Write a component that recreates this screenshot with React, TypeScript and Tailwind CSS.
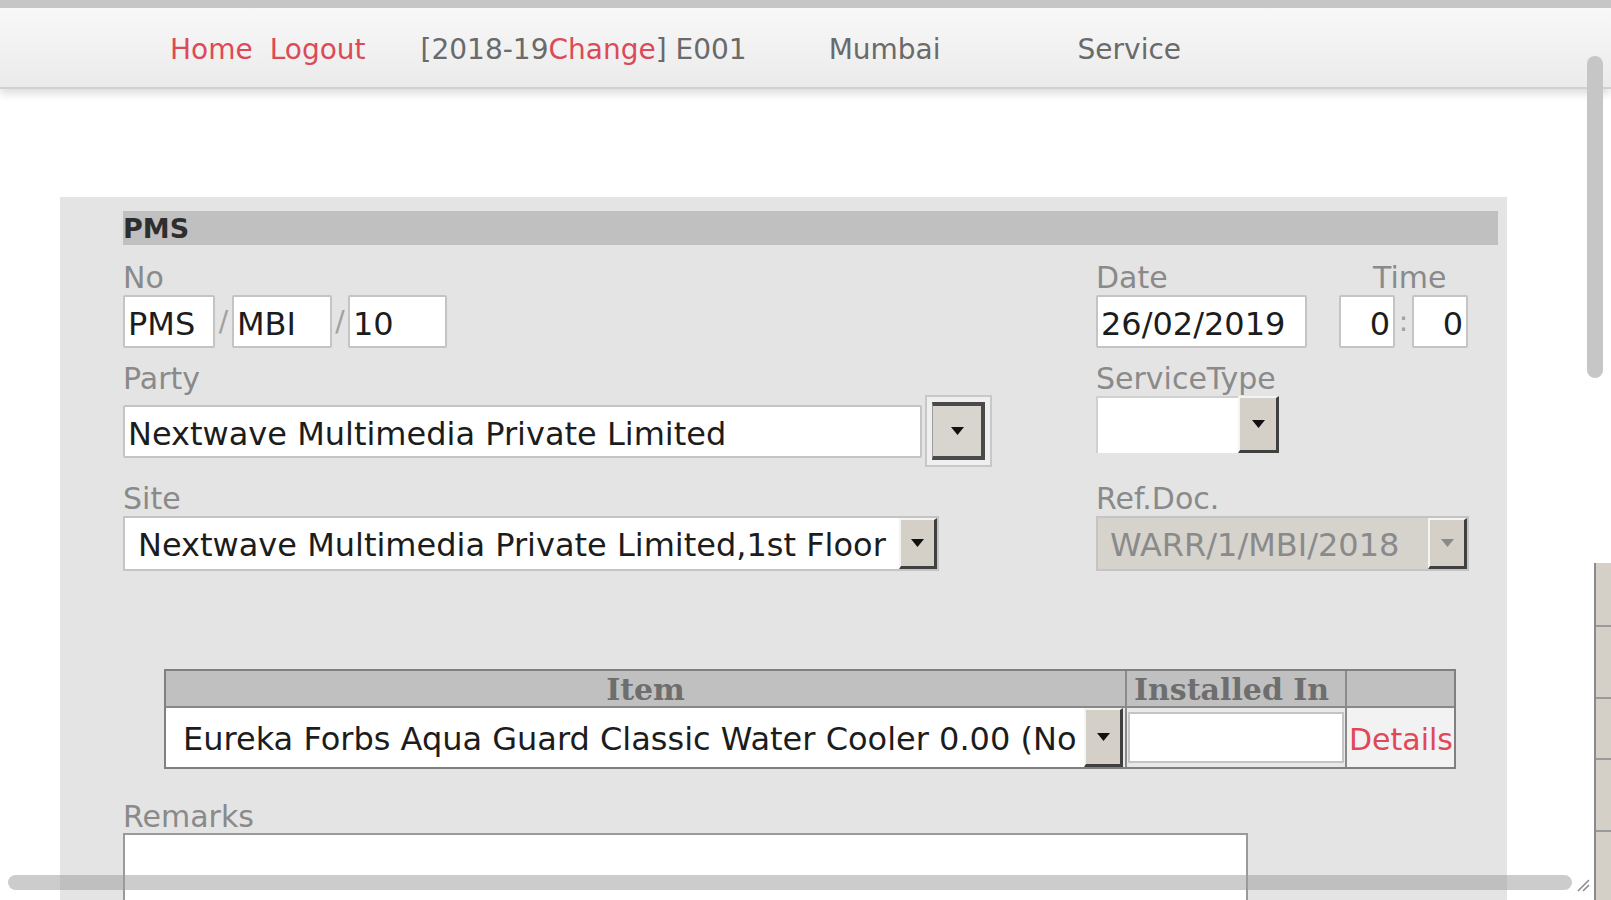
import React from "react";

const sans = "font-['DejaVu_Sans',sans-serif]";

const Arrow = ({ color = "#111" }: { color?: string }) => (
  <svg width="13" height="8" viewBox="0 0 13 8">
    <path d="M0 0h13L6.5 8z" fill={color} />
  </svg>
);

// classic 3d dropdown button
const DropBtn = ({ className = "", muted = false }: { className?: string; muted?: boolean }) => (
  <div
    className={`flex items-center justify-center bg-[#d4d0c8] border-t-2 border-l-2 border-t-[#f4f4f4] border-l-[#f4f4f4] border-b-[3px] border-r-[3px] border-b-[#404040] border-r-[#404040] ${className}`}
  >
    <Arrow color={muted ? "#8a8a8a" : "#111"} />
  </div>
);

const Label = ({ children, className = "" }: { children: React.ReactNode; className?: string }) => (
  <div className={`h-[34px] leading-[36px] text-[30px] text-[#8a8a8a] ${className}`}>{children}</div>
);

const Box = ({ value, className = "" }: { value: string; className?: string }) => (
  <div
    className={`h-[53px] overflow-hidden bg-white border-2 border-[#c4c4c4] rounded-[2px] leading-[55px] text-[32px] text-[#1c1c1c] px-[3px] ${className}`}
  >
    {value}
  </div>
);

export default function App() {
  return (
    <div className={`relative h-[900px] w-[1611px] overflow-hidden bg-white ${sans}`}>
      {/* top bar */}
      <header className="h-[89px] border-t-[8px] border-[#c6c6c6] bg-gradient-to-b from-[#f8f8f8] to-[#ebebeb] border-b-2 border-b-[#d0d0d0] shadow-[0_5px_8px_rgba(0,0,0,0.13)]">
        <nav className="flex h-full items-center pl-[170px] pt-[4px] text-[28px] text-[#6a6a6a]">
          <a className="text-[#dc4a58]">Home</a>
          <a className="ml-[17px] text-[#dc4a58]">Logout</a>
          <span className="ml-[55px]">
            [2018-19<a className="text-[#dc4a58]">Change</a>] E001
          </span>
          <span className="ml-[82px]">Mumbai</span>
          <span className="ml-[137px]">Service</span>
        </nav>
      </header>

      {/* form panel */}
      <div className="mt-[108px] ml-[60px] w-[1447px] h-[703px] bg-[#e4e4e4] pt-[14px] pl-[63px] pr-[9px]">
        <div className="h-[34px] bg-[#c0c0c0] text-[27px] font-bold leading-[36px] text-[#2e2e2e]">PMS</div>

        {/* No / Date / Time */}
        <div className="mt-[15px] grid grid-cols-[973px_1fr]">
          <div>
            <Label>No</Label>
            <div className="mt-px flex items-center">
              <Box value="PMS" className="w-[92px]" />
              <span className="w-[17px] text-center text-[28px] text-[#a0a0a0]">/</span>
              <Box value="MBI" className="w-[100px]" />
              <span className="w-[16px] text-center text-[28px] text-[#a0a0a0]">/</span>
              <Box value="10" className="w-[99px]" />
            </div>
          </div>
          <div className="flex">
            <div className="w-[211px]">
              <Label>Date</Label>
              <Box value="26/02/2019" className="mt-px w-[211px]" />
            </div>
            <div className="ml-[32px]">
              <Label className="pl-[34px]">Time</Label>
              <div className="mt-px flex items-center">
                <Box value="0" className="w-[56px] text-right" />
                <span className="w-[17px] text-center text-[28px] text-[#a0a0a0]">:</span>
                <Box value="0" className="w-[56px] text-right" />
              </div>
            </div>
          </div>
        </div>

        {/* Party / ServiceType */}
        <div className="mt-[13px] grid grid-cols-[973px_1fr]">
          <div>
            <Label>Party</Label>
            <div className="flex h-[72px] items-center">
              <Box value="Nextwave Multimedia Private Limited" className="w-[799px]" />
              <div className="ml-[3px] h-[72px] w-[67px] border-2 border-[#c8c8c8] bg-[#efefef] p-[5px]">
                <div className="flex h-full items-center justify-center bg-[#d8d5ce] border-t-[4px] border-r-[4px] border-b-[4px] border-l border-t-[#4a4a4a] border-r-[#4a4a4a] border-b-[#4a4a4a] border-l-[#9a9a9a]">
                  <Arrow />
                </div>
              </div>
            </div>
          </div>
          <div>
            <Label>ServiceType</Label>
            <div className="mt-px flex h-[57px] w-[183px]">
              <div className="flex-1 bg-white border-t-2 border-l-2 border-[#d0d0d0]" />
              <DropBtn className="w-[41px]" />
            </div>
          </div>
        </div>

        {/* Site / Ref.Doc. */}
        <div className="mt-[14px] grid grid-cols-[973px_1fr]">
          <div>
            <Label>Site</Label>
            <div className="mt-px flex h-[55px] w-[816px] border-2 border-[#c4c4c4] bg-white">
              <div className="flex-1 overflow-hidden whitespace-nowrap pl-[13px] text-[32px] leading-[55px] text-[#1c1c1c]">
                Nextwave Multimedia Private Limited,1st Floor
              </div>
              <DropBtn className="w-[38px]" />
            </div>
          </div>
          <div>
            <Label>Ref.Doc.</Label>
            <div className="mt-px flex h-[55px] w-[373px] border-2 border-[#c4c4c4] bg-[#d6d3cd]">
              <div className="flex-1 pl-[12px] text-[32px] leading-[55px] text-[#8a8a8a]">WARR/1/MBI/2018</div>
              <DropBtn className="w-[39px]" muted />
            </div>
          </div>
        </div>

        {/* items table */}
        <div className="mt-[98px] ml-[41px] w-[1292px] border-2 border-[#808080] bg-[#e9e9e9]">
          <div className="grid h-[37px] grid-cols-[961px_220px_1fr] bg-[#c0c0c0] border-b-2 border-[#888] font-['DejaVu_Serif',serif] text-[30px] font-bold leading-[37px] text-[#6e6e6e]">
            <div className="text-center border-r-2 border-[#8a8a8a]">Item</div>
            <div className="pl-[7px] border-r-2 border-[#8a8a8a] whitespace-nowrap overflow-hidden">Installed In</div>
            <div />
          </div>
          <div className="grid h-[59px] grid-cols-[961px_220px_1fr] grid-rows-[59px]">
            <div className="flex overflow-hidden border-r-2 border-[#8a8a8a] pr-[2px]">
              <div className="flex-1 overflow-hidden whitespace-nowrap bg-white pl-[17px] text-[32px] leading-[63px] text-[#1c1c1c]">
                Eureka Forbs Aqua Guard Classic Water Cooler 0.00 (No Warranty)
              </div>
              <DropBtn className="w-[39px]" />
            </div>
            <div className="flex items-center border-r-2 border-[#8a8a8a] px-[1px]">
              <div className="h-[51px] w-full bg-white border-2 border-[#c4c4c4]" />
            </div>
            <div className="overflow-hidden whitespace-nowrap bg-[#f2f2f2] pl-[2px] text-[30px] leading-[63px] text-[#e04858]">Details</div>
          </div>
        </div>

        {/* remarks */}
        <Label className="mt-[30px]">Remarks</Label>
        <div className="h-[90px] w-[1125px] border-t-2 border-l-2 border-r-2 border-[#9a9a9a] bg-white" />
      </div>

      {/* scrollbars and window edge */}
      <div className="absolute left-[1587px] top-[56px] h-[322px] w-[16px] rounded-full bg-[#c6c6c6]" />
      <div className="absolute left-[1594px] top-[563px] h-[337px] w-[17px] border-l-2 border-[#8a8a8a] bg-[#d4d0c8]">
        <div className="mt-[62px] border-t-2 border-[#9a9a9a]" />
        <div className="mt-[70px] border-t-2 border-[#9a9a9a]" />
        <div className="mt-[59px] border-t-2 border-[#9a9a9a]" />
        <div className="mt-[70px] border-t-2 border-[#9a9a9a]" />
      </div>
      <div className="absolute left-[8px] top-[875px] h-[15px] w-[1564px] rounded-full bg-[#9a9a9a]/50" />
      <svg className="absolute left-[1576px] top-[878px]" width="14" height="14" viewBox="0 0 14 14">
        <path d="M2 13L13 2M7 13L13 7" stroke="#888" strokeWidth="1.5" />
      </svg>
    </div>
  );
}
